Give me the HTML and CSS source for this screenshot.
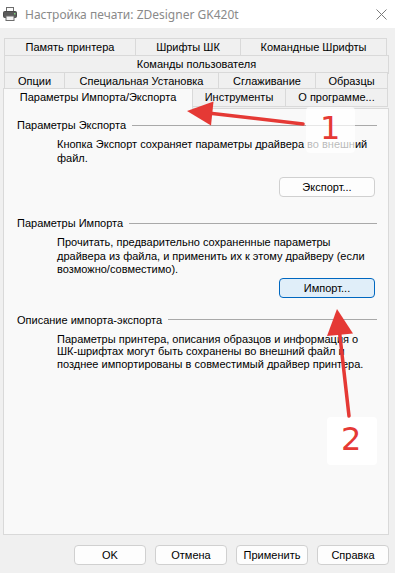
FILE: index.html
```html
<!DOCTYPE html>
<html lang="ru">
<head>
    <meta charset="UTF-8">
    <meta name="viewport" content="width=device-width, initial-scale=1.0">
    <title>Настройка печати: ZDesigner GK420t</title>
    <link rel="stylesheet" href="styles.css">
</head>
<body>
    <div class="window">
        <div class="titlebar">
            <svg class="app-icon" width="14" height="14" viewBox="0 0 14 14">
                <rect x="3.5" y="0.5" width="7" height="4" fill="#fafafa" stroke="#6d6d6d"/>
                <rect x="0.5" y="4.5" width="13" height="6" rx="1" fill="#5a5a5a" stroke="#4a4a4a"/>
                <rect x="3" y="9" width="8" height="4.5" fill="#f4f4f4" stroke="#6d6d6d"/>
                <rect x="11" y="6" width="1.5" height="1.5" fill="#7fd07f"/>
            </svg>
            <span class="title">Настройка печати: ZDesigner GK420t</span>
            <svg class="close" width="11" height="11" viewBox="0 0 11 11">
                <path d="M0.5 0.5 L10.5 10.5 M10.5 0.5 L0.5 10.5" stroke="#7a7a7a" stroke-width="1"/>
            </svg>
        </div>

        <div class="dialog">
            <div class="tabs">
                <div class="tab-row">
                    <div class="tab w132">Память принтера</div>
                    <div class="tab w105">Шрифты ШК</div>
                    <div class="tab w147">Командные Шрифты</div>
                </div>
                <div class="tab-row">
                    <div class="tab w385">Команды пользователя</div>
                </div>
                <div class="tab-row">
                    <div class="tab w60">Опции</div>
                    <div class="tab w155">Специальная Установка</div>
                    <div class="tab w97">Сглаживание</div>
                    <div class="tab w73">Образцы</div>
                </div>
                <div class="tab-row front-row">
                    <div class="tab tab-selected w190">Параметры Импорта/Экспорта</div>
                    <div class="tab w93">Инструменты</div>
                    <div class="tab w103">О программе...</div>
                </div>
            </div>

            <div class="panel">
                <section class="group">
                    <div class="group-head">Параметры Экспорта</div>
                    <p class="group-text export-text">Кнопка Экспорт сохраняет параметры драйвера во внешний<br>файл.</p>
                    <div class="group-actions export-actions">
                        <button type="button" class="btn">Экспорт...</button>
                    </div>
                </section>

                <section class="group">
                    <div class="group-head">Параметры Импорта</div>
                    <p class="group-text import-text">Прочитать, предварительно сохраненные параметры<br>драйвера из файла, и применить их к этому драйверу (если<br>возможно/совместимо).</p>
                    <div class="group-actions import-actions">
                        <button type="button" class="btn btn-focus">Импорт...</button>
                    </div>
                </section>

                <section class="group">
                    <div class="group-head">Описание импорта-экспорта</div>
                    <p class="group-text about-text">Параметры принтера, описания образцов и информация о<br>ШК-шрифтах могут быть сохранены во внешний файл и<br>позднее импортированы в совместимый драйвер принтера.</p>
                </section>
            </div>

            <div class="dialog-buttons">
                <button type="button" class="btn btn-dialog">OK</button>
                <button type="button" class="btn btn-dialog">Отмена</button>
                <button type="button" class="btn btn-dialog">Применить</button>
                <button type="button" class="btn btn-dialog">Справка</button>
            </div>
        </div>
    </div>

    <!-- red callouts drawn on top of the screenshot -->
    <svg class="callouts" width="417" height="573" viewBox="0 0 417 573">
        <rect x="306" y="107" width="49" height="46" rx="4" fill="#ffffff" fill-opacity="0.72"/>
        <rect x="327" y="417" width="50" height="48" rx="4" fill="#ffffff"/>
        <path d="M303 124 L208 113" stroke="#e53935" stroke-width="3.5" stroke-linecap="round"/>
        <polygon points="187,111 213.5,101.5 211,125.5" fill="#e53935"/>
        <path d="M349 416 L339.5 332" stroke="#e53935" stroke-width="3.5" stroke-linecap="round"/>
        <polygon points="337,309 353,333.5 327,336" fill="#e53935"/>
    </svg>
    <span class="callout-num num-one">1</span>
    <span class="callout-num num-two">2</span>
</body>
</html>
```

FILE: styles.css
```css
body {
    margin: 0;
    width: 417px;
    height: 573px;
    background-color: #ffffff;
    font-family: "Liberation Sans", Arial, sans-serif;
    font-size: 11px;
    color: #000000;
    overflow: hidden;
}
.window {
    width: 395px;
    height: 573px;
}
.titlebar {
    height: 28px;
    display: flex;
    align-items: center;
    background-color: #ffffff;
    font-family: "Noto Sans", "Open Sans", sans-serif;
    font-size: 12px;
}
.app-icon {
    margin-left: 3px;
    margin-right: 8px;
}
.title {
    flex: 1;
    color: #8a8a8a;
}
.close {
    margin-right: 8px;
}
.dialog {
    height: 545px;
    box-sizing: border-box;
    padding-top: 10px;
    background-color: #f0f0f0;
}
.tabs {
    margin-left: 4px;
}
.tab-row {
    display: flex;
    height: 18px;
    margin-top: -1px;
}
.tab-row:first-child {
    margin-top: 0;
}
.tab {
    box-sizing: border-box;
    height: 19px;
    margin-left: -1px;
    border: 1px solid #d9d9d9;
    background-color: #f0f0f0;
    text-align: center;
    line-height: 17px;
    white-space: nowrap;
}
.tab:first-child {
    margin-left: 0;
}
.front-row {
    align-items: flex-end;
}
.front-row .tab {
    height: 19px;
}
.tab-selected {
    position: relative;
    z-index: 1;
    height: 21px !important;
    margin-left: -1px !important;
    margin-bottom: -2px;
    border-bottom: none;
    background-color: #f9f9f9;
    line-height: 17px;
}
.w60 { width: 61px; }
.w73 { width: 73px; }
.w93 { width: 94px; }
.w97 { width: 98px; }
.w103 { width: 103px; }
.w105 { width: 106px; }
.w132 { width: 132px; }
.w147 { width: 147px; }
.w155 { width: 155px; }
.w190 { width: 190px; }
.w385 { width: 385px; }
.panel {
    box-sizing: border-box;
    width: 386px;
    height: 427px;
    margin-left: 3px;
    margin-top: 1px;
    padding: 8px 11px 0 13px;
    border: 1px solid #d9d9d9;
    background-color: #f9f9f9;
}
.group-head {
    display: flex;
    align-items: center;
    height: 16px;
    line-height: 16px;
}
.group-head::after {
    content: "";
    flex: 1;
    height: 1px;
    margin-left: 6px;
    background-color: #a9a9a9;
}
.group-text {
    margin: 0;
    padding-left: 40px;
    white-space: nowrap;
}
.export-text {
    margin-top: 4px;
    line-height: 14px;
}
.import-text {
    margin-top: 5px;
    line-height: 13.5px;
}
.about-text {
    margin-top: 5px;
    line-height: 12.5px;
}
.group-actions {
    display: flex;
    justify-content: flex-end;
    padding-right: 2px;
}
.export-actions {
    margin-top: 12px;
    margin-bottom: 18px;
}
.import-actions {
    margin-top: 1px;
    margin-bottom: 14px;
}
.btn {
    box-sizing: border-box;
    width: 96px;
    height: 20px;
    padding: 0;
    border: 1px solid #d0d0d0;
    border-radius: 4px;
    background-color: #fdfdfd;
    font-family: inherit;
    font-size: 11px;
    color: #000000;
    line-height: 16px;
}
.btn-focus {
    border-color: #0067c0;
    background-color: #e0eef9;
}
.dialog-buttons {
    display: flex;
    justify-content: flex-end;
    gap: 9px;
    width: 389px;
    margin-top: 10px;
}
.btn-dialog {
    width: 72px;
}
.callouts {
    position: absolute;
    top: 0;
    left: 0;
    pointer-events: none;
}
.callout-num {
    position: absolute;
    font-family: "DejaVu Sans", sans-serif;
    font-size: 32px;
    line-height: 32px;
    color: #e53935;
}
.num-one {
    left: 320px;
    top: 112px;
}
.num-two {
    left: 341px;
    top: 423px;
}
```
